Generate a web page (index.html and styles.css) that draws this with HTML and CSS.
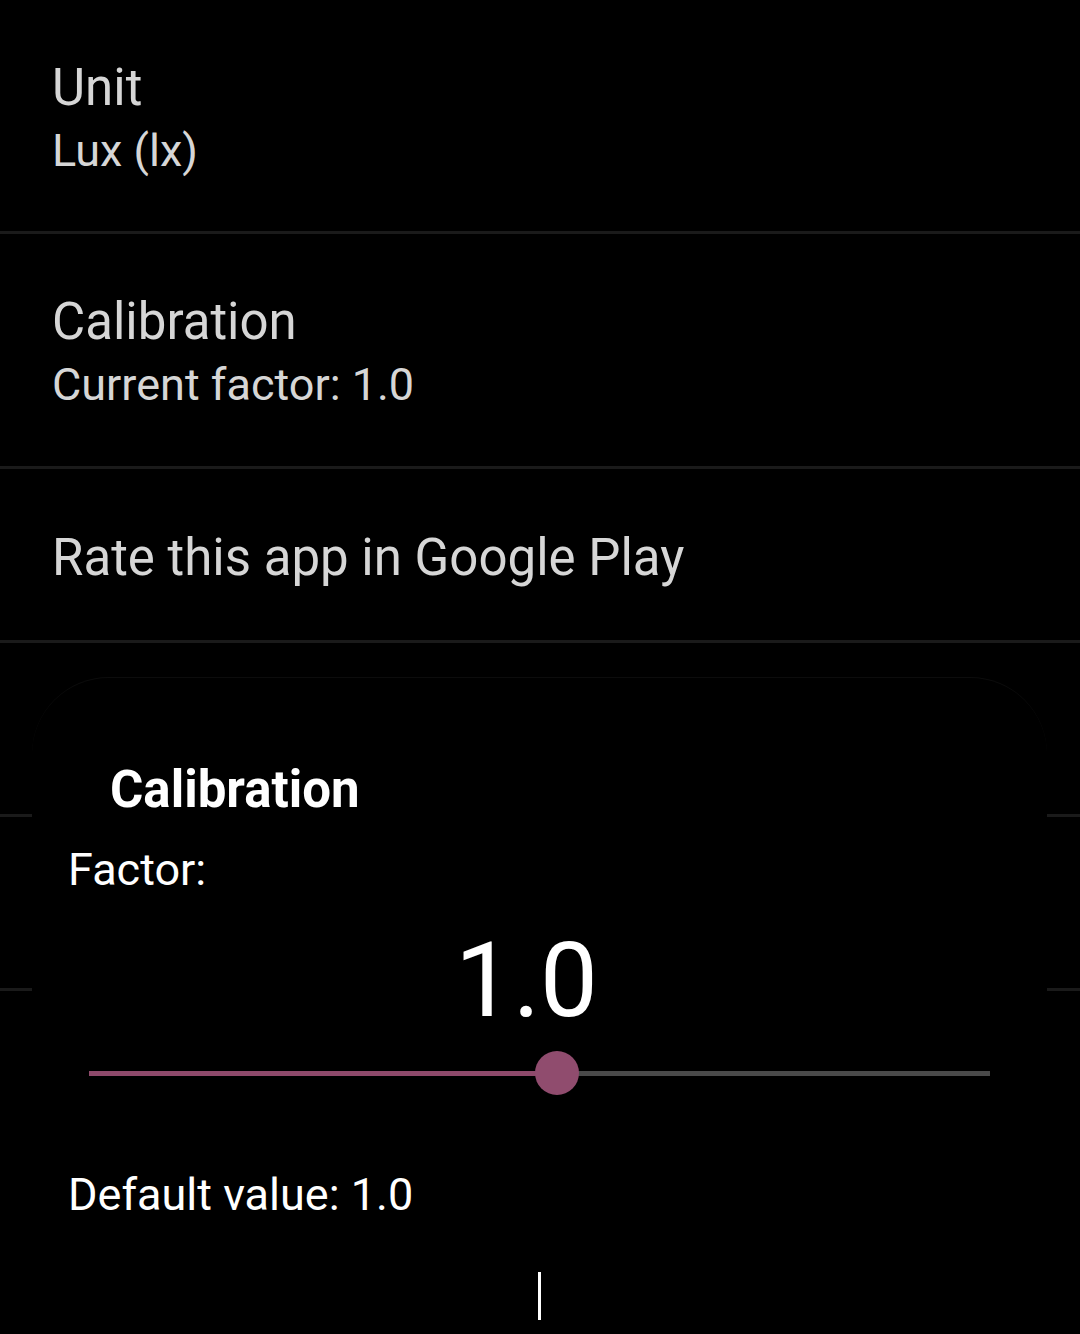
FILE: index.html
```html
<!DOCTYPE html>
<html>
<head>
<meta charset="utf-8">
<link rel="stylesheet" href="styles.css">
</head>
<body>
<div class="screen">
  <div class="list">
    <div class="item item-first">
      <div class="title">Unit</div>
      <div class="summary">Lux (lx)</div>
    </div>
    <div class="divider"></div>
    <div class="item">
      <div class="title">Calibration</div>
      <div class="summary">Current factor: 1.0</div>
    </div>
    <div class="divider"></div>
    <div class="item item-single">
      <div class="title">Rate this app in Google Play</div>
    </div>
    <div class="divider"></div>
    <div class="item item-single"></div>
    <div class="divider"></div>
    <div class="item item-single"></div>
    <div class="divider"></div>
    <div class="item item-single"></div>
  </div>

  <div class="dialog">
    <div class="dialog-title">Calibration</div>
    <div class="factor-label">Factor:</div>
    <div class="factor-value">1.0</div>
    <div class="slider">
      <div class="track-active"></div>
      <div class="thumb"></div>
      <div class="track-inactive"></div>
    </div>
    <div class="default-value">Default value: 1.0</div>
    <div class="cursor-row"><div class="cursor"></div></div>
  </div>
</div>
</body>
</html>
```
FILE: styles.css
```css
html, body {
  margin: 0;
  padding: 0;
  background: #000;
}
body {
  font-family: Roboto, "Noto Sans", sans-serif;
  width: 1080px;
  height: 1334px;
  overflow: hidden;
}
.screen {
  position: relative;
  width: 1080px;
  height: 1334px;
  overflow: hidden;
}
.list {
  display: flex;
  flex-direction: column;
}
.item {
  height: 232px;
  box-sizing: border-box;
  padding: 8px 52px 0 52px;
  display: flex;
  flex-direction: column;
  justify-content: center;
  color: #d6d6d6;
}
.item-first {
  height: 231px;
}
.item-single {
  height: 171px;
  padding-top: 6px;
}
.title {
  font-size: 51px;
  line-height: 62px;
}
.summary {
  font-size: 45px;
  line-height: 64px;
}
.divider {
  height: 3px;
  background: #1a1a1a;
}
.dialog {
  position: absolute;
  left: 32px;
  top: 677px;
  width: 1015px;
  height: 720px;
  background: #000;
  border-radius: 77px 77px 0 0;
  border-top: 1px solid #0c0c0c;
  box-sizing: border-box;
  color: #fff;
  display: flex;
  flex-direction: column;
}
.dialog-title {
  font-weight: 700;
  font-size: 51px;
  line-height: 60px;
  padding: 82px 0 0 78px;
}
.factor-label {
  font-size: 45px;
  line-height: 60px;
  padding: 20px 0 0 36px;
}
.factor-value {
  font-size: 103px;
  line-height: 110px;
  text-align: center;
  padding: 26px 26px 0 0;
}
.slider {
  display: flex;
  align-items: center;
  height: 44px;
  margin: 15px 57px 0 57px;
}
.track-active {
  width: 468px;
  height: 5px;
  background: #8e4a6b;
}
.thumb {
  flex: none;
  width: 44px;
  height: 44px;
  border-radius: 50%;
  background: #904c6e;
  margin-left: -22px;
  margin-right: -22px;
  position: relative;
  z-index: 1;
}
.track-inactive {
  flex: 1;
  height: 5px;
  background: #4a4a4a;
}
.default-value {
  font-size: 45px;
  line-height: 60px;
  padding: 70px 0 0 36px;
}
.cursor-row {
  display: flex;
  justify-content: center;
  padding-top: 47px;
}
.cursor {
  width: 3px;
  height: 48px;
  background: #fff;
}
```
